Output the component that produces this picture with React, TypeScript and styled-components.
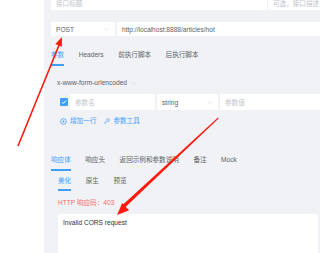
import styled, { createGlobalStyle } from "styled-components";
import { ChevronDown, Wrench } from "lucide-react";

const GlobalStyle = createGlobalStyle`
  html, body {
    margin: 0;
    padding: 0;
    background: #ffffff;
  }
  body {
    width: 320px;
    height: 253px;
    overflow: hidden;
    font-family: "Liberation Sans", "Noto Sans CJK SC", sans-serif;
    font-size: 6.6px;
    color: #606266;
  }
`;

const Page = styled.div`
  position: relative;
  display: flex;
  width: 320px;
  height: 253px;
  overflow: hidden;
`;

const Gutter = styled.div`
  width: 44px;
  flex-shrink: 0;
  background: #ffffff;
`;

const Panel = styled.div`
  flex: 1;
  display: flex;
  flex-direction: column;
  background: #f0f2f5;
  padding-left: 7px;
  overflow: hidden;
`;

const Row = styled.div<{ $top: number; $indent?: number; $gap?: number }>`
  display: flex;
  align-items: center;
  margin-top: ${(p) => p.$top}px;
  margin-left: ${(p) => p.$indent ?? 0}px;
  gap: ${(p) => p.$gap ?? 0}px;
  flex-shrink: 0;
`;

const Field = styled.div<{ $w?: number; $h: number; $muted?: boolean }>`
  display: flex;
  align-items: center;
  justify-content: space-between;
  box-sizing: border-box;
  height: ${(p) => p.$h}px;
  ${(p) => (p.$w ? `width: ${p.$w}px; flex-shrink: 0;` : "flex: 1;")}
  padding: 0 5px;
  background: #ffffff;
  color: ${(p) => (p.$muted ? "#c0c4cc" : "#606266")};
  white-space: nowrap;
  overflow: hidden;
`;

const Chevron = styled(ChevronDown)`
  color: #c0c4cc;
  flex-shrink: 0;
`;

const Tabs = styled.div<{ $top: number; $indent?: number }>`
  display: flex;
  gap: 14.5px;
  margin-top: ${(p) => p.$top}px;
  margin-left: ${(p) => p.$indent ?? 0}px;
  flex-shrink: 0;
`;

const Tab = styled.div<{ $active?: boolean }>`
  line-height: 10px;
  padding-bottom: 3.5px;
  border-bottom: 2px solid ${(p) => (p.$active ? "#409eff" : "transparent")};
  color: ${(p) => (p.$active ? "#409eff" : "#606266")};
  white-space: nowrap;
`;

const Encoding = styled.div`
  display: flex;
  align-items: center;
  gap: 3px;
  line-height: 10px;
  color: #606266;
`;

const Check = styled.div`
  width: 8px;
  height: 8px;
  border-radius: 1px;
  background: #409eff;
  display: flex;
  align-items: center;
  justify-content: center;
  flex-shrink: 0;
`;

const LinkBtn = styled.div`
  display: flex;
  align-items: center;
  gap: 3px;
  line-height: 10px;
  color: #409eff;
  margin-right: 8px;
`;

const Status = styled.div`
  margin-top: 7px;
  margin-left: 7px;
  line-height: 10px;
  color: #f56c6c;
`;

const Body = styled.div`
  flex: 1;
  margin: 6px 2px 0 7px;
  padding: 4px 5px;
  background: #ffffff;
  line-height: 10px;
  color: #303133;
`;

const Annotation = styled.svg`
  position: absolute;
  left: 0;
  top: 0;
  pointer-events: none;
`;

export default function App() {
  return (
    <Page>
      <GlobalStyle />
      <Gutter />
      <Panel>
        <Row $top={-4} $gap={1}>
          <Field $w={216} $h={14} $muted>
            接口标题
          </Field>
          <Field $h={14} $muted>
            可选，接口描述
          </Field>
        </Row>

        <Row $top={12} $gap={2}>
          <Field $w={64} $h={14}>
            POST
            <Chevron size={7} strokeWidth={1.5} />
          </Field>
          <Field $h={14}>http://localhost:8888/articles/hot</Field>
        </Row>

        <Tabs $top={14}>
          <Tab $active>参数</Tab>
          <Tab>Headers</Tab>
          <Tab>前执行脚本</Tab>
          <Tab>后执行脚本</Tab>
        </Tabs>

        <Row $top={12.5} $indent={6}>
          <Encoding>
            x-www-form-urlencoded
            <Chevron size={7} strokeWidth={1.5} />
          </Encoding>
        </Row>

        <Row $top={6} $indent={9} $gap={2}>
          <Check>
            <svg width="6" height="6" viewBox="0 0 6 6">
              <path d="M1 3.1 L2.4 4.5 L5 1.6" stroke="#fff" strokeWidth="1" fill="none" />
            </svg>
          </Check>
          <Field $w={85} $h={16} $muted>
            参数名
          </Field>
          <Field $w={61} $h={16}>
            string
            <Chevron size={7} strokeWidth={1.5} />
          </Field>
          <Field $h={16} $muted>
            参数值
          </Field>
        </Row>

        <Row $top={6} $indent={9}>
          <LinkBtn>
            <svg width="7" height="7" viewBox="0 0 8 8">
              <circle cx="4" cy="4" r="3.3" stroke="#409eff" strokeWidth="0.9" fill="none" />
              <circle cx="4" cy="4" r="1.1" fill="#409eff" />
            </svg>
            增加一行
          </LinkBtn>
          <LinkBtn>
            <Wrench size={6} strokeWidth={2.2} />
            参数工具
          </LinkBtn>
        </Row>

        <Tabs $top={29}>
          <Tab $active>响应体</Tab>
          <Tab>响应头</Tab>
          <Tab>返回示例和参数说明</Tab>
          <Tab>备注</Tab>
          <Tab>Mock</Tab>
        </Tabs>

        <Tabs $top={5} $indent={7}>
          <Tab $active>美化</Tab>
          <Tab>原生</Tab>
          <Tab>预览</Tab>
        </Tabs>

        <Status>HTTP 响应码：403</Status>

        <Body>Invalid CORS request</Body>
      </Panel>

      <Annotation width="320" height="253" viewBox="0 0 320 253">
        <line x1="18" y1="146" x2="59.5" y2="44" stroke="#ff1a0f" strokeWidth="1.6" />
        <polygon points="62,37 61.85,46.7 55.35,44" fill="#ff1a0f" />
        <polygon points="218,117.6 218.6,118.4 125,207.5 122.6,205" fill="#ff1a0f" />
        <polygon points="117,215 129.1,210.3 122.2,203.1" fill="#ff1a0f" />
      </Annotation>
    </Page>
  );
}
